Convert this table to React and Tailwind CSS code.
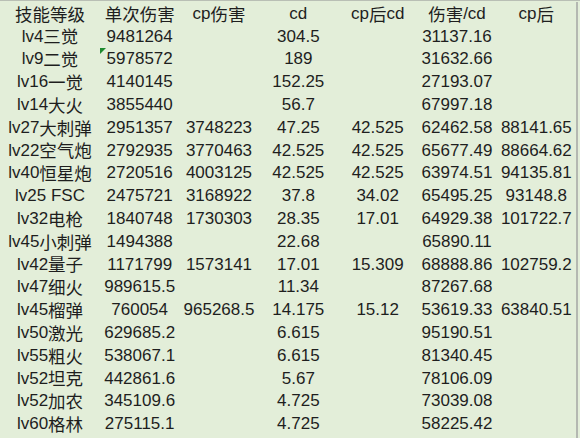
const header = ['技能等级', '单次伤害', 'cp伤害', 'cd', 'cp后cd', '伤害/cd', 'cp后'];

const rows = [
  ['lv4三觉', '9481264', '', '304.5', '', '31137.16', ''],
  ['lv9二觉', '5978572', '', '189', '', '31632.66', ''],
  ['lv16一觉', '4140145', '', '152.25', '', '27193.07', ''],
  ['lv14大火', '3855440', '', '56.7', '', '67997.18', ''],
  ['lv27大刺弹', '2951357', '3748223', '47.25', '42.525', '62462.58', '88141.65'],
  ['lv22空气炮', '2792935', '3770463', '42.525', '42.525', '65677.49', '88664.62'],
  ['lv40恒星炮', '2720516', '4003125', '42.525', '42.525', '63974.51', '94135.81'],
  ['lv25 FSC', '2475721', '3168922', '37.8', '34.02', '65495.25', '93148.8'],
  ['lv32电枪', '1840748', '1730303', '28.35', '17.01', '64929.38', '101722.7'],
  ['lv45小刺弹', '1494388', '', '22.68', '', '65890.11', ''],
  ['lv42量子', '1171799', '1573141', '17.01', '15.309', '68888.86', '102759.2'],
  ['lv47细火', '989615.5', '', '11.34', '', '87267.68', ''],
  ['lv45榴弹', '760054', '965268.5', '14.175', '15.12', '53619.33', '63840.51'],
  ['lv50激光', '629685.2', '', '6.615', '', '95190.51', ''],
  ['lv55粗火', '538067.1', '', '6.615', '', '81340.45', ''],
  ['lv52坦克', '442861.6', '', '5.67', '', '78106.09', ''],
  ['lv52加农', '345109.6', '', '4.725', '', '73039.08', ''],
  ['lv60格林', '275115.1', '', '4.725', '', '58225.42', ''],
];

// split latin / CJK runs so the CJK glyphs can get their own size
const parts = (s) => s.match(/[\u4e00-\u9fff]+|[^\u4e00-\u9fff]+/g) || [];

function Row({ cells, first }) {
  return (
    <div className="grid grid-cols-[100px_repeat(6,1fr)] h-[22.8px]">
      {cells.map((c, i) => (
        <div key={i} className="relative flex items-center justify-center whitespace-nowrap leading-none">
          {first && i === 1 && (
            <span className="absolute left-0 top-0 w-0 h-0 border-t-[6px] border-r-[6px] border-t-[#1f8a2e] border-r-transparent" />
          )}
          {parts(c).map((p, j) =>
            /[\u4e00-\u9fff]/.test(p) ? (
              <span key={j} className="text-[17.5px] font-['Noto_Sans_CJK_SC',sans-serif]">{p}</span>
            ) : (
              <span key={j}>{p}</span>
            )
          )}
        </div>
      ))}
    </div>
  );
}

export default function App() {
  return (
    <div className="w-[580px] h-[438px] overflow-hidden bg-[#e3eed9] border-t border-[#b9bfb5] pt-[1px] text-[17px] text-[#1e1e1e] font-['Liberation_Sans','Noto_Sans_CJK_SC',sans-serif]">
      <div className="w-[578px] h-full border-r-2 border-[#b4b8b1]">
        <Row cells={header} />
        {rows.map((r, i) => (
          <Row key={i} cells={r} first={i === 1} />
        ))}
      </div>
    </div>
  );
}
